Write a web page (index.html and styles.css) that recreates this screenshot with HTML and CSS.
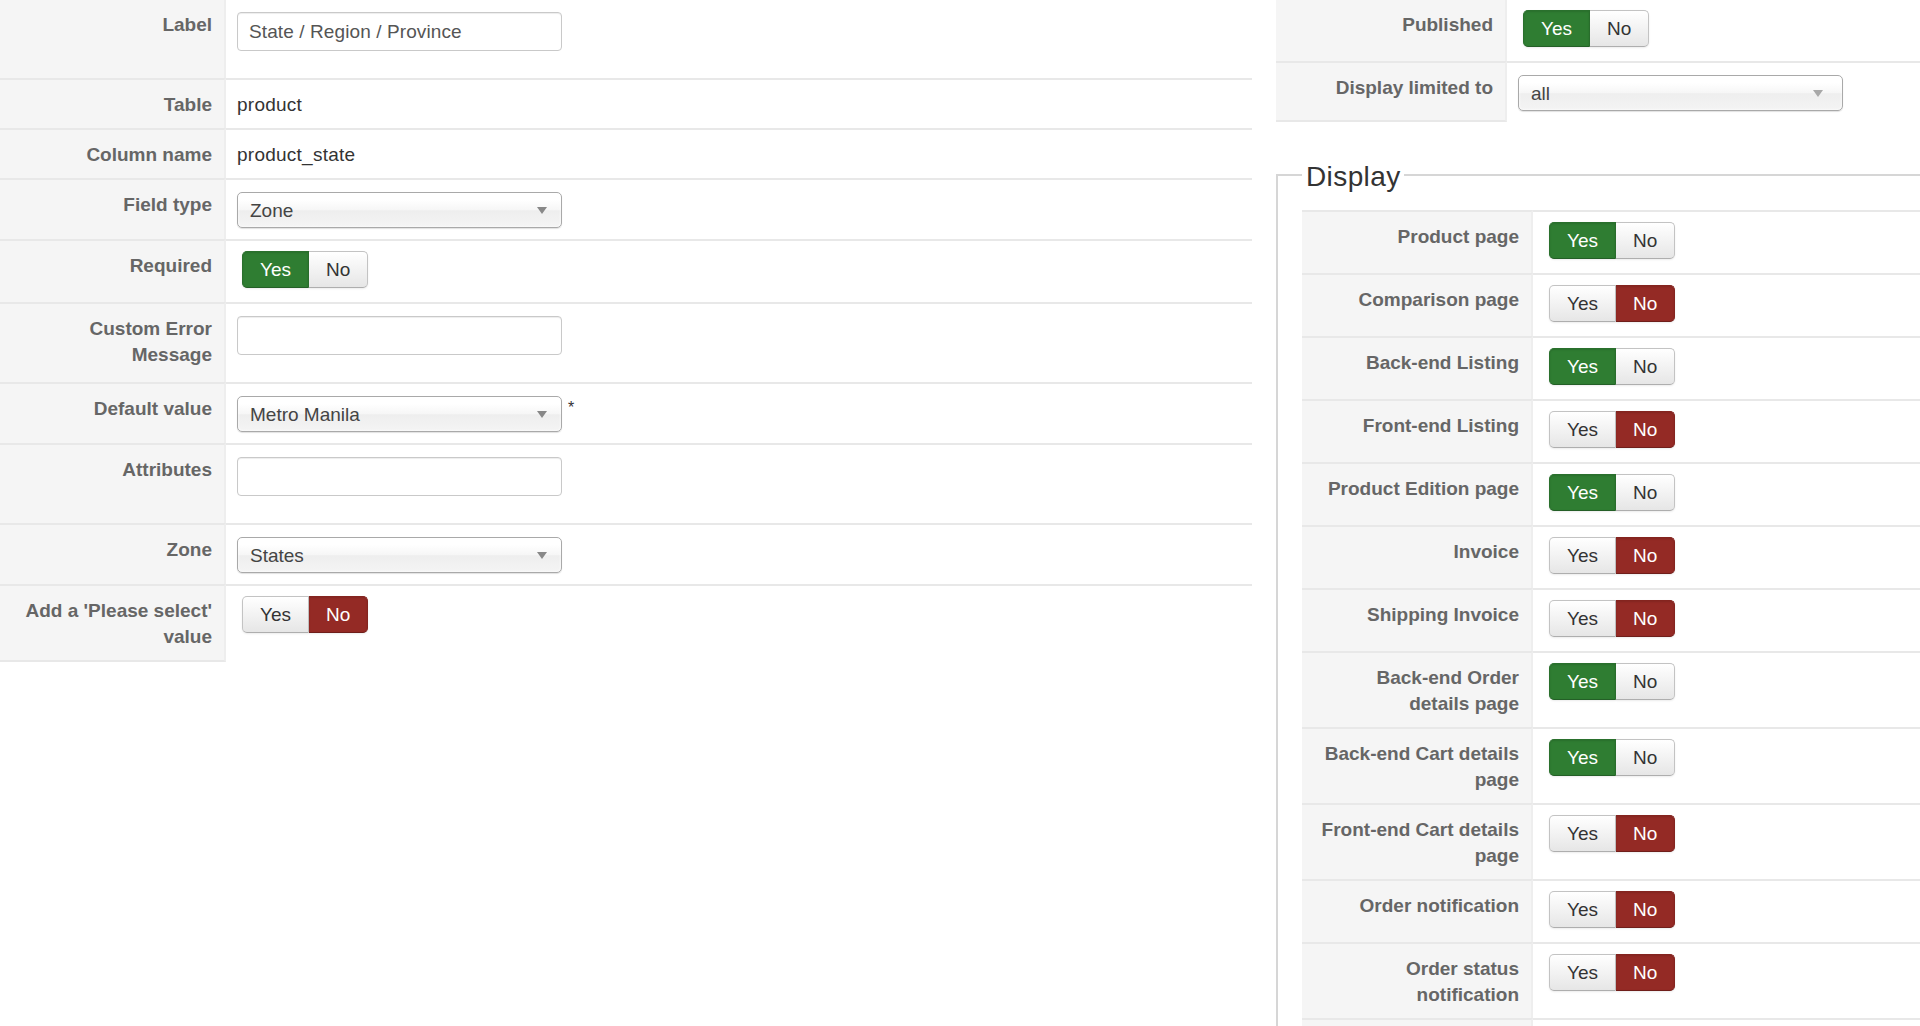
FILE: index.html
```html
<!DOCTYPE html>
<html lang="en">
<head>
<meta charset="utf-8">
<title>Custom field</title>
<link rel="stylesheet" href="styles.css">
</head>
<body>
<div class="page">
  <div class="main-col">
    <table class="admintable">
      <tr>
        <td class="key">Label</td>
        <td><div class="input">State / Region / Province</div></td>
      </tr>
      <tr>
        <td class="key">Table</td>
        <td class="val">product</td>
      </tr>
      <tr>
        <td class="key">Column name</td>
        <td class="val">product_state</td>
      </tr>
      <tr>
        <td class="key">Field type</td>
        <td><div class="select"><span>Zone</span><svg class="caret" width="10" height="7" viewBox="0 0 10 7"><polygon points="0,0 10,0 5,7"/></svg></div></td>
      </tr>
      <tr>
        <td class="key">Required</td>
        <td><div class="toggle"><span class="btn yes on">Yes</span><span class="btn no">No</span></div></td>
      </tr>
      <tr>
        <td class="key">Custom Error Message</td>
        <td><div class="input"></div></td>
      </tr>
      <tr>
        <td class="key">Default value</td>
        <td><div class="with-req"><div class="select"><span>Metro Manila</span><svg class="caret" width="10" height="7" viewBox="0 0 10 7"><polygon points="0,0 10,0 5,7"/></svg></div><span class="req">*</span></div></td>
      </tr>
      <tr>
        <td class="key">Attributes</td>
        <td><div class="input"></div></td>
      </tr>
      <tr>
        <td class="key">Zone</td>
        <td><div class="select"><span>States</span><svg class="caret" width="10" height="7" viewBox="0 0 10 7"><polygon points="0,0 10,0 5,7"/></svg></div></td>
      </tr>
      <tr class="last">
        <td class="key">Add a 'Please select' value</td>
        <td><div class="toggle"><span class="btn yes">Yes</span><span class="btn no on">No</span></div></td>
      </tr>
    </table>
  </div>

  <div class="side-col">
    <table class="admintable side">
      <tr>
        <td class="key">Published</td>
        <td><div class="toggle"><span class="btn yes on">Yes</span><span class="btn no">No</span></div></td>
      </tr>
      <tr class="last">
        <td class="key">Display limited to</td>
        <td><div class="select light"><span>all</span><svg class="caret" width="10" height="7" viewBox="0 0 10 7"><polygon points="0,0 10,0 5,7"/></svg></div></td>
      </tr>
    </table>

    <fieldset class="adminform">
      <legend>Display</legend>
      <table class="admintable side boxed">
        <tr>
          <td class="key">Product page</td>
          <td><div class="toggle"><span class="btn yes on">Yes</span><span class="btn no">No</span></div></td>
        </tr>
        <tr>
          <td class="key">Comparison page</td>
          <td><div class="toggle"><span class="btn yes">Yes</span><span class="btn no on">No</span></div></td>
        </tr>
        <tr>
          <td class="key">Back-end Listing</td>
          <td><div class="toggle"><span class="btn yes on">Yes</span><span class="btn no">No</span></div></td>
        </tr>
        <tr>
          <td class="key">Front-end Listing</td>
          <td><div class="toggle"><span class="btn yes">Yes</span><span class="btn no on">No</span></div></td>
        </tr>
        <tr>
          <td class="key">Product Edition page</td>
          <td><div class="toggle"><span class="btn yes on">Yes</span><span class="btn no">No</span></div></td>
        </tr>
        <tr>
          <td class="key">Invoice</td>
          <td><div class="toggle"><span class="btn yes">Yes</span><span class="btn no on">No</span></div></td>
        </tr>
        <tr>
          <td class="key">Shipping Invoice</td>
          <td><div class="toggle"><span class="btn yes">Yes</span><span class="btn no on">No</span></div></td>
        </tr>
        <tr>
          <td class="key">Back-end Order details page</td>
          <td><div class="toggle"><span class="btn yes on">Yes</span><span class="btn no">No</span></div></td>
        </tr>
        <tr>
          <td class="key">Back-end Cart details page</td>
          <td><div class="toggle"><span class="btn yes on">Yes</span><span class="btn no">No</span></div></td>
        </tr>
        <tr>
          <td class="key">Front-end Cart details page</td>
          <td><div class="toggle"><span class="btn yes">Yes</span><span class="btn no on">No</span></div></td>
        </tr>
        <tr>
          <td class="key">Order notification</td>
          <td><div class="toggle"><span class="btn yes">Yes</span><span class="btn no on">No</span></div></td>
        </tr>
        <tr>
          <td class="key">Order status notification</td>
          <td><div class="toggle"><span class="btn yes">Yes</span><span class="btn no on">No</span></div></td>
        </tr>
        <tr class="spacer">
          <td class="key"></td>
          <td></td>
        </tr>
      </table>
    </fieldset>
  </div>
</div>
</body>
</html>
```

FILE: styles.css
```css
* {
  box-sizing: border-box;
}

html,
body {
  height: 100%;
}

body {
  margin: 0;
  background: #fff;
  color: #333;
  font-family: "Liberation Sans", Arial, Helvetica, sans-serif;
  font-size: 19px;
  overflow: hidden;
}

/* two-column edit screen; the side column runs past the window edge */
.page {
  display: flex;
  gap: 24px;
  width: 1996px;
  height: 100%;
  overflow: hidden;
}

.main-col {
  flex: none;
  width: 1252px;
}

.side-col {
  flex: none;
  width: 720px;
}

/* key / value form tables */
.admintable {
  width: 100%;
  border-collapse: separate;
  border-spacing: 0;
}

.admintable td {
  padding: 12px 11px 10px;
  line-height: 26px;
  vertical-align: top;
  color: #333;
}

.admintable td.val {
  letter-spacing: 0.25px;
}

.admintable tr + tr td {
  border-top: 2px solid #e8e8e8;
}

.admintable td.key {
  width: 226px;
  padding: 12px 12px 10px 12px;
  background: #f5f5f5;
  border-right: 2px solid #eeeeee;
  color: #666;
  font-weight: bold;
  text-align: right;
}

.admintable tr.last td.key {
  border-bottom: 2px solid #e8e8e8;
}

.admintable.side td.key {
  width: 231px;
  padding-left: 17px;
}

.admintable.boxed tr:first-child td {
  border-top: 2px solid #e8e8e8;
}

.admintable tr.spacer td {
  height: 30px;
}

/* text input */
.input {
  width: 325px;
  height: 39px;
  margin-bottom: 17px;
  padding: 0 11px;
  border: 1px solid #c9c9c9;
  border-radius: 4px;
  background: #fff;
  box-shadow: inset 0 1px 1px rgba(0, 0, 0, 0.075);
  color: #555;
  line-height: 37px;
  letter-spacing: 0.1px;
  white-space: nowrap;
}

/* chosen-style dropdown */
.select {
  display: flex;
  align-items: center;
  justify-content: space-between;
  width: 325px;
  height: 36px;
  margin-bottom: 1px;
  padding: 0 14px 0 12px;
  border: 1px solid #a9a9a9;
  border-radius: 5px;
  background: linear-gradient(#ffffff 20%, #f6f6f6 50%, #eeeeee 52%, #f4f4f4 100%);
  box-shadow: inset 0 0 3px #fff, 0 1px 1px rgba(0, 0, 0, 0.12);
  color: #444;
  line-height: 34px;
}

.select span {
  padding-top: 2px;
}

.select .caret {
  fill: #888;
}

.select.light .caret {
  fill: #a8a8a8;
  margin-right: 5px;
}

.with-req {
  display: flex;
  align-items: flex-start;
  gap: 6px;
}

.req {
  font-size: 16px;
  line-height: 20px;
  color: #333;
  padding-top: 2px;
}

/* yes / no radio switch */
.toggle {
  display: flex;
  width: max-content;
  margin: -2px 0 4px 5px;
}

.toggle .btn {
  display: block;
  height: 37px;
  padding: 0 17px;
  border: 1px solid #c3c3c3;
  border-bottom-color: #aeaeae;
  background: linear-gradient(#ffffff, #e6e6e6);
  box-shadow: inset 0 1px 0 rgba(255, 255, 255, 0.3), 0 1px 2px rgba(0, 0, 0, 0.08);
  color: #333;
  line-height: 35px;
}

.toggle .btn.yes {
  border-radius: 5px 0 0 5px;
}

.toggle .btn.no {
  border-left: 0;
  border-radius: 0 5px 5px 0;
}

.toggle .btn.yes.on {
  background: #2f7d32;
  border-color: #2a702d;
  border-bottom-color: #245f27;
  color: #fff;
  box-shadow: inset 0 1px 2px rgba(0, 0, 0, 0.12), 0 1px 2px rgba(0, 0, 0, 0.08);
}

.toggle .btn.no.on {
  background: #942a25;
  border-color: #84241f;
  border-bottom-color: #6f1e1a;
  color: #fff;
  box-shadow: inset 0 1px 2px rgba(0, 0, 0, 0.12), 0 1px 2px rgba(0, 0, 0, 0.08);
}

/* "Display" group box */
.adminform {
  margin: 36px 0 0;
  min-width: 0;
  padding: 18px 0 0 24px;
  border: 2px solid #d6d6d6;
}

.adminform legend {
  padding: 3px 3px 0 4px;
  color: #333;
  font-size: 28px;
  line-height: 31px;
  letter-spacing: 0.4px;
}
```
